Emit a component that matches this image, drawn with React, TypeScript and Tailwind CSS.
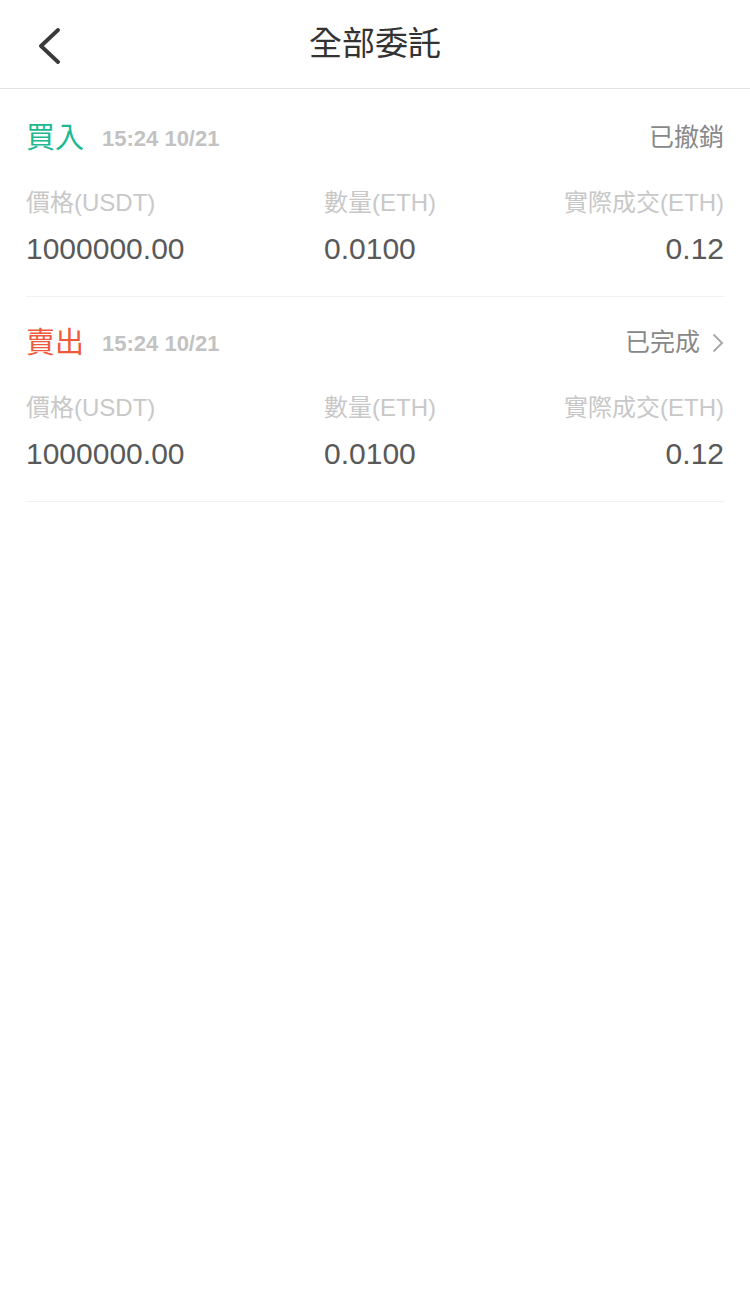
import React from 'react';

type Order = {
  side: 'buy' | 'sell';
  time: string;
  status: string;
  link: boolean;
  price: string;
  amount: string;
  filled: string;
};

const orders: Order[] = [
  { side: 'buy', time: '15:24 10/21', status: '已撤銷', link: false, price: '1000000.00', amount: '0.0100', filled: '0.12' },
  { side: 'sell', time: '15:24 10/21', status: '已完成', link: true, price: '1000000.00', amount: '0.0100', filled: '0.12' },
];

const font = { fontFamily: '"Liberation Sans", "Noto Sans CJK TC", sans-serif' };

const OrderItem: React.FC<{ order: Order }> = ({ order }) => {
  const isBuy = order.side === 'buy';
  return (
    <div className="border-b border-[#f0f0f0] pt-[26px] pb-[29px]">
      <div className="flex h-[40px] items-center justify-between">
        <div className="flex items-center">
          <span className={`text-[29px] leading-[40px] ${isBuy ? 'text-[#1db992]' : 'text-[#ef5a3c]'}`}>
            {isBuy ? '買入' : '賣出'}
          </span>
          <span className="ml-[18px] text-[22px] font-semibold text-[#c2c2c2]">{order.time}</span>
        </div>
        <div className="flex items-center text-[25px] text-[#888888]">
          <span>{order.status}</span>
          {order.link && (
            <svg className="ml-[12px] w-[12px] h-[20px]" viewBox="0 0 12 20" fill="none" stroke="#aaaaaa" strokeWidth={2}>
              <path d="M1.5 1.5 L10 10 L1.5 18.5" />
            </svg>
          )}
        </div>
      </div>

      <div className="mt-[29px] grid grid-cols-[298px_1fr_auto] text-[24px] leading-[32px] text-[#c8c8c8]">
        <span>價格(USDT)</span>
        <span>數量(ETH)</span>
        <span className="text-right">實際成交(ETH)</span>
      </div>

      <div className="mt-[12px] grid grid-cols-[298px_1fr_auto] text-[30px] leading-[36px] text-[#595959]">
        <span>{order.price}</span>
        <span>{order.amount}</span>
        <span className="text-right">{order.filled}</span>
      </div>
    </div>
  );
};

const App: React.FC = () => {
  return (
    <div className="min-h-[1294px] w-[750px] bg-white" style={font}>
      <header className="relative flex h-[89px] items-center justify-center border-b border-[#e2e2e2]">
        <button className="absolute left-[33px] top-[24px] p-[4px]">
          <svg className="w-[24px] h-[36px]" viewBox="0 0 24 36" fill="none" stroke="#3a3a3a" strokeWidth={3.8} strokeLinecap="round" strokeLinejoin="round">
            <path d="M21 2 L4 18 L21 34" />
          </svg>
        </button>
        <h1 className="text-[33px] font-normal text-[#333333]">全部委託</h1>
      </header>

      <div className="px-[26px] pt-[3px]">
        {orders.map((o, i) => (
          <OrderItem key={i} order={o} />
        ))}
      </div>
    </div>
  );
};

export default App;
